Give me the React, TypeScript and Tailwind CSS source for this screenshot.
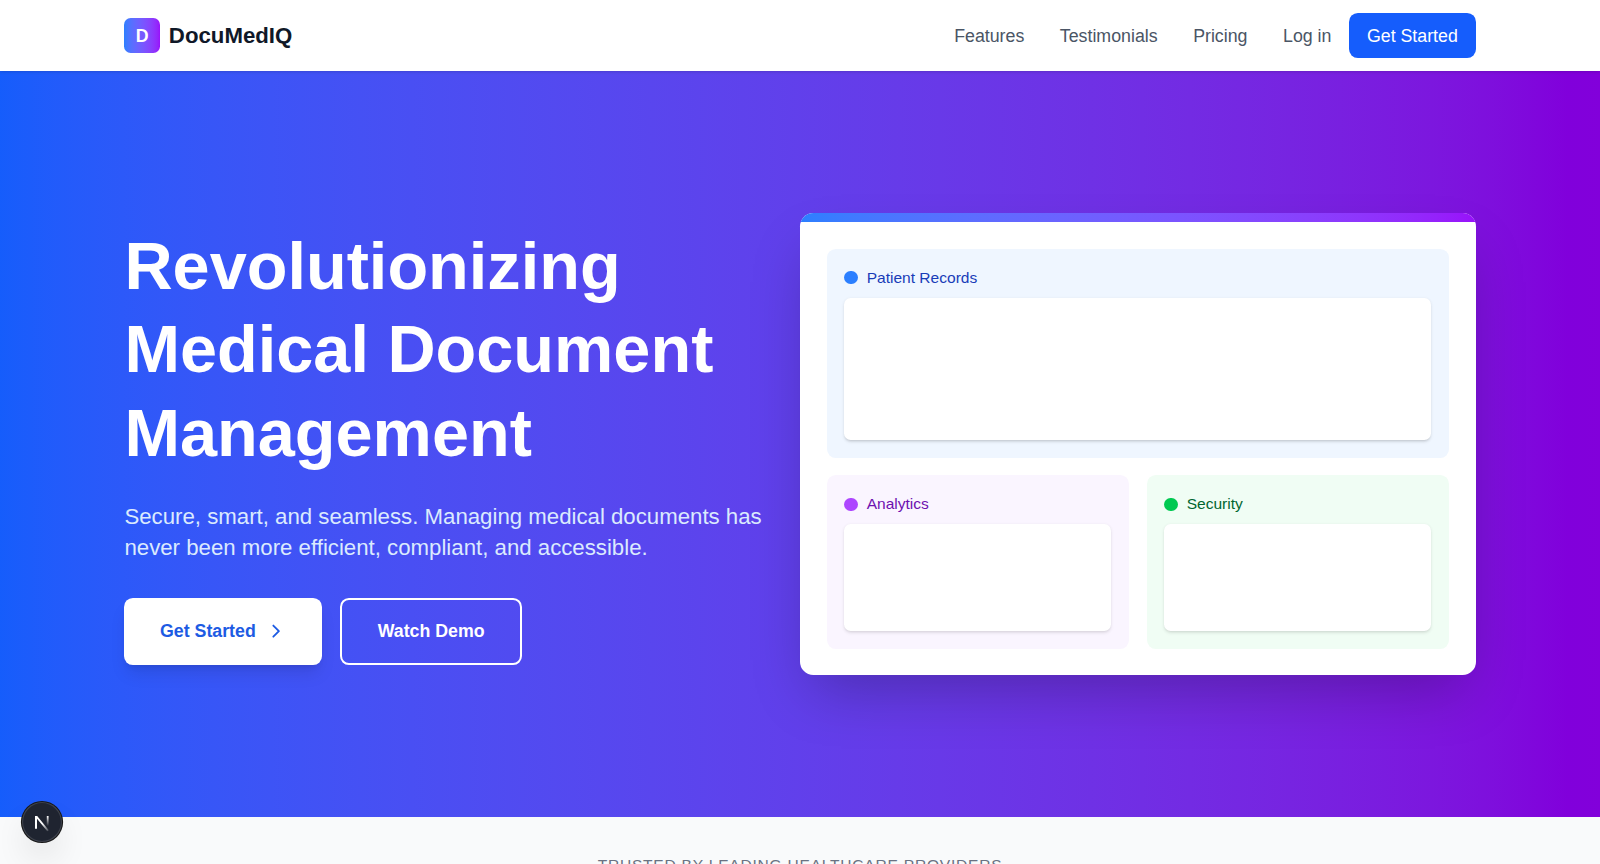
import { ChevronRight } from "lucide-react";

type PanelProps = {
  title: string;
  className: string;
  dotClass: string;
  titleClass: string;
  bodyClass: string;
};

function Panel({ title, className, dotClass, titleClass, bodyClass }: PanelProps) {
  return (
    <div className={`rounded-lg p-4 ${className}`}>
      <div className="mb-2 flex items-center">
        <div className={`mr-2 size-3 rounded-full ${dotClass}`} />
        <div className={`text-sm ${titleClass}`}>{title}</div>
      </div>
      <div className={`rounded-md bg-white shadow-sm ${bodyClass}`} />
    </div>
  );
}

function Header() {
  return (
    <header className="relative z-10 h-16 bg-white shadow-sm">
      <div className="mx-auto flex h-full max-w-7xl items-center justify-between px-8">
        <div className="flex items-center gap-2">
          <div className="flex size-8 items-center justify-center rounded-md bg-gradient-to-r from-blue-500 to-purple-600 pt-px font-bold text-white">
            D
          </div>
          <span className="text-xl font-bold text-gray-900">DocuMedIQ</span>
        </div>
        <nav className="flex items-center gap-8 text-gray-600">
          <a className="pt-px">Features</a>
          <a className="pt-px">Testimonials</a>
          <a className="pt-px">Pricing</a>
          <div className="flex items-center gap-4">
            <a className="pt-px">Log in</a>
            <a className="rounded-lg bg-blue-600 px-4 pt-[8.5px] pb-[7.5px] text-white">Get Started</a>
          </div>
        </nav>
      </div>
    </header>
  );
}

function Hero() {
  return (
    <section className="flex h-[671.7px] items-center bg-gradient-to-r from-blue-600 to-purple-700">
      <div className="mx-auto grid w-full max-w-7xl grid-cols-2 items-center px-8">
        <div>
          <h1 className="pt-px text-6xl leading-tight font-bold text-white">
            Revolutionizing
            <br />
            Medical Document
            <br />
            Management
          </h1>
          <p className="mt-[23.6px] text-xl text-blue-100">
            Secure, smart, and seamless. Managing medical documents has never been more efficient, compliant, and
            accessible.
          </p>
          <div className="mt-[31.2px] flex gap-4 font-bold">
            <a className="flex h-15 items-center rounded-lg bg-white px-8 text-[#1d5be3] shadow-lg">
              Get Started
              <ChevronRight className="ml-2 size-5" />
            </a>
            <a className="flex h-15 items-center rounded-lg border-2 border-white px-8 text-white">Watch Demo</a>
          </div>
        </div>
        <div className="overflow-hidden rounded-xl bg-white shadow-2xl">
          <div className="h-2 bg-gradient-to-r from-blue-500 to-purple-600" />
          <div className="grid grid-cols-2 gap-4 p-6">
            <Panel
              title="Patient Records"
              className="col-span-2 bg-blue-50"
              dotClass="bg-blue-500"
              titleClass="text-blue-800"
              bodyClass="h-32"
            />
            <Panel
              title="Analytics"
              className="bg-purple-50"
              dotClass="bg-purple-500"
              titleClass="text-purple-800"
              bodyClass="h-24"
            />
            <Panel
              title="Security"
              className="bg-green-50"
              dotClass="bg-green-500"
              titleClass="text-green-800"
              bodyClass="h-24"
            />
          </div>
        </div>
      </div>
    </section>
  );
}

function DevBadge() {
  return (
    <div className="fixed bottom-5 left-5 z-20 flex size-9 items-center justify-center rounded-full bg-[#1f2430] shadow-[0_0_0_1px_#171717,inset_0_0_0_1px_rgba(255,255,255,0.14),0_16px_32px_-8px_rgba(0,0,0,0.24)]">
      <svg width="36" height="36" viewBox="0 0 40 40" fill="none">
        <defs>
          <linearGradient id="n-diagonal" x1="21" y1="21" x2="27" y2="28" gradientUnits="userSpaceOnUse">
            <stop stopColor="white" />
            <stop offset="1" stopColor="white" stopOpacity="0.2" />
          </linearGradient>
          <linearGradient id="n-stem" x1="26" y1="14" x2="26" y2="24" gradientUnits="userSpaceOnUse">
            <stop stopColor="white" />
            <stop offset="1" stopColor="white" stopOpacity="0" />
          </linearGradient>
        </defs>
        <path d="M13 14H15.2L26.8 28.2L25.3 29.2L15 16.8V26.8H13Z" fill="url(#n-diagonal)" />
        <path d="M24.8 14H26.6V24H24.8Z" fill="url(#n-stem)" />
      </svg>
    </div>
  );
}

export default function App() {
  return (
    <div className="h-[777.6px] overflow-hidden bg-white font-['Liberation_Sans',Arial,sans-serif] [zoom:1.11111]">
      <Header />
      <Hero />
      <section className="bg-gray-50 py-8">
        <p className="pt-[0.6px] text-center text-sm tracking-wider text-gray-500 uppercase">
          Trusted by leading healthcare providers
        </p>
      </section>
      <DevBadge />
    </div>
  );
}
